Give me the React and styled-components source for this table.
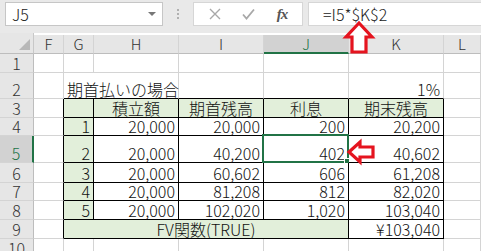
import React from "react";
import styled, { createGlobalStyle } from "styled-components";

const colors = {
  chrome: "#e9e9e9",
  header: "#e6e6e6",
  headerActive: "#d2d2d2",
  grid: "#d4d4d4",
  excelGreen: "#217346",
  tableFill: "#e2efda",
  arrow: "#e5141f",
};

const GlobalStyle = createGlobalStyle`
  html, body {
    margin: 0;
    padding: 0;
    background: #fff;
    overflow: hidden;
  }
  body {
    font-family: "Noto Sans CJK JP", "Noto Sans", sans-serif;
    font-weight: 300;
    color: #111;
  }
`;

const Window = styled.div`
  position: relative;
  width: 481px;
  height: 251px;
  overflow: hidden;
  background: ${colors.chrome};
`;

// 数式バー
const FormulaBar = styled.div`
  height: 33px;
  display: flex;
  align-items: flex-start;
  padding: 2px 0 0 5px;
  box-sizing: border-box;
`;

const NameBox = styled.div`
  width: 158px;
  height: 24px;
  box-sizing: border-box;
  background: #fff;
  border: 1px solid #c6c6c6;
  display: flex;
  align-items: center;
  justify-content: space-between;
  padding: 0 6px 0 6px;
  font-size: 16px;
  line-height: 1;
  color: #222;
`;

const DropTriangle = styled.span`
  width: 0;
  height: 0;
  border-left: 4px solid transparent;
  border-right: 4px solid transparent;
  border-top: 4px solid #777;
`;

const Grip = styled.div`
  width: 30px;
  height: 24px;
  display: flex;
  flex-direction: column;
  align-items: center;
  justify-content: center;
  gap: 2px;

  span {
    width: 2px;
    height: 2px;
    background: #b0b0b0;
  }
`;

const ButtonBox = styled.div`
  width: 110px;
  height: 24px;
  box-sizing: border-box;
  background: #fff;
  border: 1px solid #d6d6d6;
  display: flex;
  align-items: center;
  justify-content: space-around;
  padding: 0 4px;
`;

const Fx = styled.span`
  font-family: "Liberation Serif", serif;
  font-style: italic;
  font-weight: bold;
  font-size: 15px;
  color: #555;
  letter-spacing: -1px;
`;

const FormulaInput = styled.div`
  flex: 1;
  height: 24px;
  margin-left: 5px;
  box-sizing: border-box;
  background: #fff;
  border: 1px solid #d6d6d6;
  border-right: none;
  display: flex;
  align-items: center;
  padding-left: 14px;
  font-size: 16px;
  color: #222;
`;

// シート
const Sheet = styled.div`
  display: grid;
  grid-template-columns: 34px 30px 30px 85px 85px 85px 95px 1fr;
  grid-template-rows: 21px 19px 26px 19px 18px 27px 20px 18px 19px 19px 19px;
  background: #fff;
`;

const Corner = styled.div`
  position: relative;
  background: ${colors.header};
  border-right: 1px solid #c8c8c8;
  border-bottom: 1px solid #bdbdbd;

  &::after {
    content: "";
    position: absolute;
    right: 3px;
    bottom: 3px;
    border-left: 11px solid transparent;
    border-bottom: 11px solid #b8b8b8;
  }
`;

const ColHead = styled.div`
  background: ${(p) => (p.$active ? colors.headerActive : colors.header)};
  border-right: 1px solid ${colors.grid};
  border-bottom: ${(p) =>
    p.$active ? `2px solid ${colors.excelGreen}` : "1px solid #bdbdbd"};
  margin-top: 2px;
  display: flex;
  align-items: center;
  justify-content: center;
  font-size: 15px;
  line-height: 16px;
  color: ${(p) => (p.$active ? colors.excelGreen : "#333")};
  box-sizing: border-box;
`;

const RowHead = styled.div`
  background: ${(p) => (p.$active ? colors.headerActive : colors.header)};
  border-right: ${(p) =>
    p.$active ? `2px solid ${colors.excelGreen}` : "1px solid #bdbdbd"};
  border-bottom: 1px solid ${colors.grid};
  display: flex;
  align-items: flex-end;
  justify-content: center;
  font-size: 16px;
  line-height: 16px;
  padding-bottom: 1px;
  color: ${(p) => (p.$active ? colors.excelGreen : "#333")};
  box-sizing: border-box;
`;

const Cell = styled.div`
  position: relative;
  grid-column: ${(p) => (p.$span ? `span ${p.$span}` : "auto")};
  background: ${(p) => (p.$fill ? colors.tableFill : "#fff")};
  border-right: 1px solid ${(p) => (p.$br ? "#000" : colors.grid)};
  border-bottom: 1px solid ${(p) => (p.$bb ? "#000" : colors.grid)};
  display: flex;
  align-items: flex-end;
  justify-content: ${(p) =>
    p.$align === "center"
      ? "center"
      : p.$align === "left"
      ? "flex-start"
      : "flex-end"};
  padding: 0 3px 1px 3px;
  font-size: 16px;
  line-height: 16px;
  white-space: nowrap;
  box-sizing: border-box;
`;

// アクティブセルの枠とフィルハンドル
const Selection = styled.div`
  position: absolute;
  left: -2px;
  top: -2px;
  right: -1px;
  bottom: -1px;
  border: 2px solid ${colors.excelGreen};
  pointer-events: none;

  &::after {
    content: "";
    position: absolute;
    right: -4px;
    bottom: -4px;
    width: 5px;
    height: 5px;
    background: ${colors.excelGreen};
    border: 1px solid #fff;
  }
`;

const Arrow = styled.svg`
  position: absolute;
  left: ${(p) => p.$x}px;
  top: ${(p) => p.$y}px;
  overflow: visible;
`;

const columns = ["F", "G", "H", "I", "J", "K", "L"];

const rows = [
  { no: 4, amount: "20,000", start: "20,000", interest: "200", end: "20,200" },
  { no: 5, amount: "20,000", start: "40,200", interest: "402", end: "40,602" },
  { no: 6, amount: "20,000", start: "60,602", interest: "606", end: "61,208" },
  { no: 7, amount: "20,000", start: "81,208", interest: "812", end: "82,020" },
  { no: 8, amount: "20,000", start: "102,020", interest: "1,020", end: "103,040" },
];

function App() {
  return (
    <Window>
      <GlobalStyle />
      <FormulaBar>
        <NameBox>
          J5
          <DropTriangle />
        </NameBox>
        <Grip>
          <span />
          <span />
          <span />
        </Grip>
        <ButtonBox>
          <svg width="12" height="12" viewBox="0 0 12 12">
            <path d="M1 1 L11 11 M11 1 L1 11" stroke="#a8a8a8" strokeWidth="1.4" />
          </svg>
          <svg width="13" height="12" viewBox="0 0 13 12">
            <path d="M1 6.5 L4.5 10.5 L12 1.5" stroke="#a8a8a8" strokeWidth="1.8" fill="none" />
          </svg>
          <Fx>fx</Fx>
        </ButtonBox>
        <FormulaInput>=I5*$K$2</FormulaInput>
      </FormulaBar>

      <Sheet>
        {/* 列見出し */}
        <Corner />
        {columns.map((c) => (
          <ColHead key={c} $active={c === "J"}>
            {c}
          </ColHead>
        ))}

        {/* 1行目 */}
        <RowHead>1</RowHead>
        {columns.map((c) => (
          <Cell key={c} />
        ))}

        {/* 2行目 */}
        <RowHead>2</RowHead>
        <Cell />
        <Cell $span={2} $bb $align="left">
          期首払いの場合
        </Cell>
        <Cell $bb />
        <Cell $bb />
        <Cell $bb>1%</Cell>
        <Cell />

        {/* 3行目 見出し */}
        <RowHead>3</RowHead>
        <Cell $br />
        <Cell $fill $br $bb />
        <Cell $fill $br $bb $align="center">積立額</Cell>
        <Cell $fill $br $bb $align="center">期首残高</Cell>
        <Cell $fill $br $bb $align="center">利息</Cell>
        <Cell $fill $br $bb $align="center">期末残高</Cell>
        <Cell />

        {rows.map((r, i) => (
          <React.Fragment key={r.no}>
            <RowHead $active={r.no === 5}>{r.no}</RowHead>
            <Cell $br />
            <Cell $fill $br $bb>{i + 1}</Cell>
            <Cell $br $bb>{r.amount}</Cell>
            <Cell $br $bb>{r.start}</Cell>
            <Cell $br $bb>
              {r.interest}
              {r.no === 5 && <Selection />}
            </Cell>
            <Cell $br $bb>{r.end}</Cell>
            <Cell />
          </React.Fragment>
        ))}

        {/* 9行目 FV関数 */}
        <RowHead>9</RowHead>
        <Cell $br />
        <Cell $span={4} $fill $br $bb $align="center">
          FV関数(TRUE)
        </Cell>
        <Cell $br $bb>¥103,040</Cell>
        <Cell />

        <RowHead>10</RowHead>
        {columns.map((c) => (
          <Cell key={c} />
        ))}
      </Sheet>

      {/* 注目箇所の矢印 */}
      <Arrow $x={344} $y={21} width="30" height="34" viewBox="0 0 30 34">
        <path
          d="M15 2 L28 16 L22 16 L22 31 L8 31 L8 16 L2 16 Z"
          fill="#fff"
          stroke={colors.arrow}
          strokeWidth="3.2"
          strokeLinejoin="miter"
        />
      </Arrow>
      <Arrow $x={347} $y={140} width="28" height="24" viewBox="0 0 28 24">
        <path
          d="M2 12 L13 2 L13 7 L26 7 L26 17 L13 17 L13 22 Z"
          fill="#fff"
          stroke={colors.arrow}
          strokeWidth="3.2"
          strokeLinejoin="miter"
        />
      </Arrow>
    </Window>
  );
}

export default App;
